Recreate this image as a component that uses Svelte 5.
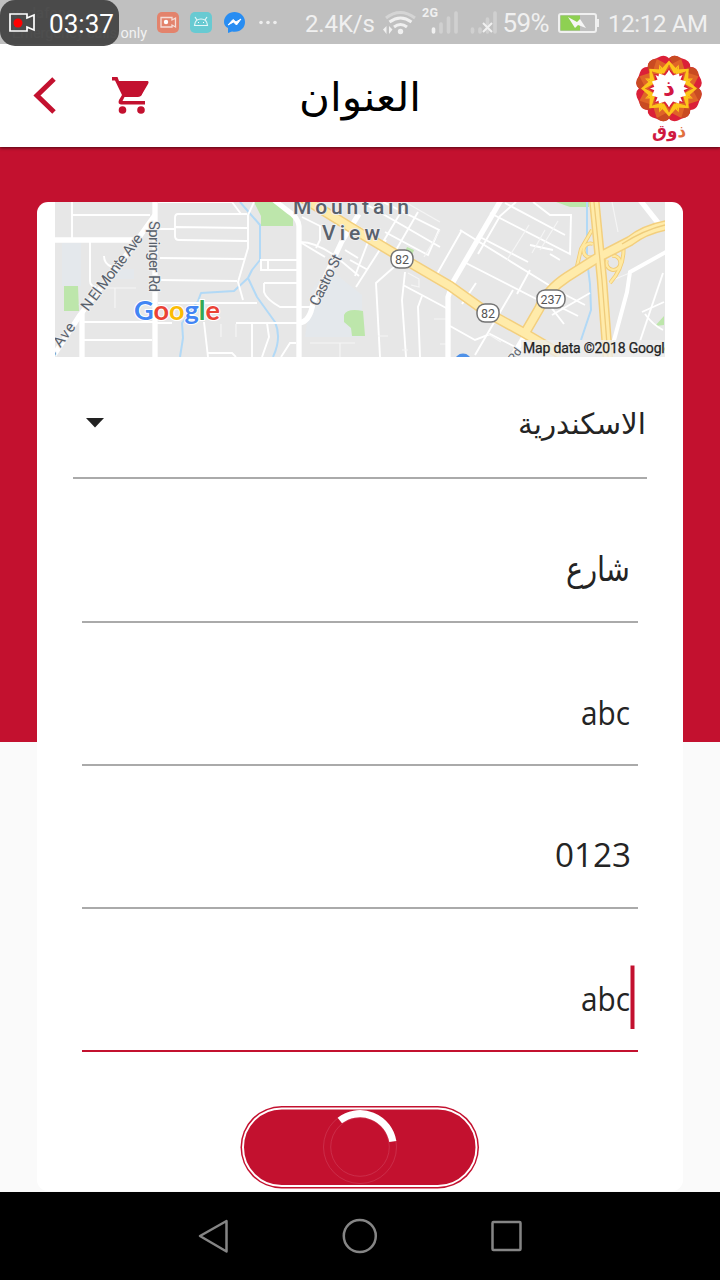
<script>
  const minorRoads = [
    'M72 202V240', 'M72 215H150', 'M90 241V281Q90 286 96 287', 'M82 322H155', 'M82 340H152', 'M104 256Q104 264 112 267',
    'M247 214H178Q175 214 175 218V236Q175 240 179 240L247 241', 'M158 229H175M175 227L247 228', 'M158 202H232L241 214', 'M160 258L245 259', 'M160 280L237 281',
    'M158 303H257', 'M254 202L248 215V248L238 282L243 300', 'M155 323H172M236 323H299', 'M204 322L208 357M208 353H232L236 357', 'M252 323V357', 'M267 323L269 337L262 357', 'M296 343H290L281 357',
    'M299 260H261V270H299M268 260V269', 'M264 283H298M264 283V292Q266 299 280 307H312', 'M300 242L325 257M302 217L320 226V240L316 248', 'M300 242Q315 242 334 255L359 276', 'M345 250L358 258',
    'M350 222L371 234L355 276', 'M362 202L440 247M383 202L439 230L428 255L385 232', 'M407 202L380 247M418 212L392 257', 'M350 260L368 270M356 287L386 240', 'M402 260L376 283L380 357',
    'M405 272L402 300L406 357M403 285L450 310', 'M422 296L418 307L420 357', 'M462 230L437 274M460 230L560 292L585 305', 'M464 262L550 306L564 324', 'M530 270L517 294M513 290L475 355',
    'M552 315L590 293M476 283L462 304', 'M450 326L475 340L490 334L525 352', 'M490 213L570 254L571 215H550L533 202', 'M505 203L565 235M516 202L500 216L478 254', 'M480 237L528 262',
    'M553 250L530 245M550 254L560 260', 'M556 305L578 316', 'M663 273L637 350', 'M642 312L664 302M645 314Q653 325 663 330'
  ];
  const fineRoads = ['M96 288H136M115 288V308', 'M221 324V337M236 324V337', 'M310 343H355M340 343V357', 'M529 225L507 260M545 230L532 253M558 221L540 250', 'M408 273L419 279V287L411 285', 'M440 230L424 257', 'M612 202L618 232', 'M608 282L632 272', 'M378 336H388M402 350H408M434 319H449M440 344H448', 'M405 202L440 222', 'M488 334L501 342'];
  const majorRoads = ['M299 357V226Q298 217 288 211L274 200', 'M155 202V357', 'M155 215L130 250L80 315L54 355', 'M55 240H140', 'M82 313V357', 'M359 214L342 241L313 303Q310 322 299 323', 'M501 200L453 282L448 297V357', 'M640 200L659 224', 'M526 334L512 357'];
  const highways = ['M303 198L350 227L402 258L450 286L488 313L526 334L560 354', 'M525 333L539 309Q547 290 567 277L597 258L630 241Q645 229 668 225', 'M594 198L602 280L608 360'];
  const ramps = ['M592 230L581 249L575 275', 'M593 244A7 7 0 1 0 593 257', 'M623 244Q626 265 610 283', 'M607 260A7 7 0 1 0 612 256'];
  const shields = [{ x: 402, y: 259, n: '82', w: 22 }, { x: 488, y: 313, n: '82', w: 22 }, { x: 551, y: 299, n: '237', w: 28 }];
  const petals = [0, 45, 90, 135, 180, 225, 270, 315];
  const fields = [
    { y: 581, text: 'شارع', x: 566, w: 64, rtl: true },
    { y: 725, text: 'abc', x: 581, w: 49 },
    { y: 867, text: '0123', x: 555, w: 76 },
    { y: 1011, text: 'abc', x: 581, w: 49, active: true }
  ];
</script>

<div class="phone">
  <div class="status">
    <svg width="300" height="48" viewBox="0 0 300 48">
      <g fill="#f2f2f2" font-family="Roboto" font-size="14.5">
        <text x="12" y="18" textLength="62">vodafone</text>
        <text x="12" y="38" textLength="135">Emergency calls only</text>
      </g>
      <rect x="0" y="0" width="119" height="46" rx="15" fill="#404040" fill-opacity=".92" />
      <path d="M10 14H27V18L34 15V30L27 27V31H10Z" fill="none" stroke="#fff" stroke-width="1.7" />
      <circle cx="18" cy="23" r="4.5" fill="red" />
      <text x="49" y="33" textLength="65" lengthAdjust="spacingAndGlyphs" font-size="26" font-family="Roboto" fill="#fff">03:37</text>
      <rect x="157" y="12" width="22" height="21" rx="5" fill="#e3836c" />
      <path d="M161 17.500H172V20L175.500 18V27L172 25V27H161Z" fill="none" stroke="#f5ddd7" stroke-width="1.300" /><circle cx="166" cy="22" r="2.200" fill="#fff" />
      <rect x="190" y="12" width="22" height="21" rx="5" fill="#68cad2" />
      <path d="M194.500 25.500Q195 19 201 19T207.500 25.500ZM197 20L195 17M205 20L207 17" fill="none" stroke="#e6f7f8" stroke-width="1.200" /><path d="M198 22.500h1M203 22.500h1" stroke="#fff" />
      <path d="M228 28V33L232 31.500C240 33 245 28 245 22C245 16 240 12 234.500 12S224 16 224 22Q224 26 228 28Z" fill="#288df2" />
      <path d="M228 25L233 19.500L236 22L241 19L236.500 25L233.500 22Z" fill="#fff" stroke="#fff" stroke-width="1" />
      <g fill="#eee"><circle cx="261" cy="22.500" r="1.800" /><circle cx="268" cy="22.500" r="1.800" /><circle cx="275" cy="22.500" r="1.800" /></g>
    </svg>
    <svg width="420" height="44" viewBox="300 0 420 44">
      <g font-family="Roboto" fill="#f0f0f0">
        <text x="305" y="31.500" textLength="70" font-size="24">2.4K/s</text>
        <text x="422" y="17" textLength="16" font-size="12.500" font-weight="700">2G</text>
        <text x="502.500" y="32" textLength="47" font-size="26">59%</text>
        <text x="608" y="31.500" textLength="100" font-size="24">12:12 AM</text>
      </g>
      <path d="M386 18Q400 7 415 18" fill="none" stroke="#d5d5d5" stroke-width="3" />
      <g fill="none" stroke="#f0f0f0" stroke-width="3"><path d="M389.500 22Q400.500 14 411.500 22M394 27Q400.500 22 407 27" /></g>
      <circle cx="400.500" cy="31.500" r="2.700" fill="#f0f0f0" />
      <path d="M383 29.500L386.500 26V34ZM389 26L392.500 29.500L389 34Z" fill="#f0f0f0" />
      <g stroke="#d0d0d0" stroke-width="3.600" stroke-linecap="round"><path d="M433.500 29V32" stroke="#f0f0f0" /><path d="M441 24V32M448.500 18V32M456 13V32M472.500 29V32M480 29V32M487.500 19V32M495 13V32" /></g>
      <path d="M483 23L492 32M492 23L483 32" stroke="#f0f0f0" stroke-width="2" />
      <rect x="559" y="14" width="37" height="18" rx="2" fill="none" stroke="#f0f0f0" stroke-width="2" /><path d="M598 19V27" stroke="#f0f0f0" stroke-width="2" /><path d="M560.500 15.500H580V30.500H560.500Z" fill="#8ed052" />
      <path d="M568 17L577 22L580 19L586 28L578 25L575 28Z" fill="#f6f6f6" />
    </svg>
  </div>

  <header>
    <svg width="720" height="103" viewBox="0 44 720 103">
      <path d="M54 79L37 95.500L54 112" fill="none" stroke="#c3112f" stroke-width="5" />
      <path d="M112 77H117.500L119 81H147Q149.500 81 148 84L141.500 95Q140.500 97 138 97H124.500L122.500 101H145V104.500H121Q117.500 104 119 100L122 95L115 80.500H112Z" fill="#c3112f" />
      <path d="M119 81H148L141 96H124Z" fill="#c3112f" />
      <circle cx="122.500" cy="110" r="3.800" fill="#c3112f" /><circle cx="141" cy="110" r="3.800" fill="#c3112f" />
      <text class="arabic" x="299" y="111" textLength="122" lengthAdjust="spacingAndGlyphs" font-size="40">العنوان</text>
      <g transform="translate(669 88.500)">
        {#each petals as a}
          <g transform="rotate({a + 22.5})">
            <path d="M0 -10L-12.500 -23Q-12 -33 -4 -33Q0 -32.500 4 -33Q12 -33 12.500 -23Z" fill="#db2038" />
            <path d="M-12.500 -24Q-11 -33 -4 -33L0 -32L-5 -24Z" fill="#c94b22" />
            <path d="M0 -32L10 -20L0 -15L-10 -20Z" fill="#df6428" />
          </g>
        {/each}
        {#each petals as a}
          <path transform="rotate({a})" d="M0 -28L8 -19L10 -24L10 -17L5 -15L0 -24L-5 -15L-10 -17L-10 -24L-8 -19Z" fill="#fdc51b" />
        {/each}
        <path d="M0 -18L4 -13L10 -15L11 -9L17 -7L14 0L17 7L11 9L10 15L4 13L0 18L-4 13L-10 15L-11 9L-17 7L-14 0L-17 -7L-11 -9L-10 -15L-4 -13Z" fill="#fff" />
      </g>
      <text class="arabic bold" x="663" y="96" textLength="12" lengthAdjust="spacingAndGlyphs" font-size="23" fill="#d31742">ذ</text>
      <text class="arabic bold" x="652" y="137" textLength="34" lengthAdjust="spacingAndGlyphs" font-size="18" fill="#cf1941"><tspan fill="#e1703d">ذ</tspan>وق</text>
    </svg>
  </header>

  <main>
    <section class="card">
      <svg class="map" width="610" height="155" viewBox="55 202 610 155">
        <path fill="#e7e7e7" d="M55 202h610v155H55z" />
        <path fill="#e4e8ec" d="M62 243h19v43h-19zM108 269h26v10h-26zM312 290L328 268L362 295V337H305Z" />
        <path fill="#bde6ab" d="M64 286h14l1 25H64zM254 202H281L293 217V226H261V216ZM344 315Q347 308 363 311L365 336H352L351 328L344 322ZM556 202H589V207H570ZM655 326L664 316V325ZM407 247L414 250L412 255L405 252Z" />
        <g fill="none" stroke="#b2d9f6" stroke-width="2" stroke-linejoin="round"><path d="M240 202L260 225V260L252 270L248 278L234 291L201 293L198 301L182 323L183 338L180 357M248 278L257 297L275 322Q282 338 273 357M587 202V260L590 284L591 310L581 340" /></g>
        <g fill="none" stroke="#fff" stroke-width="1.900">{#each minorRoads as d}<path {d} />{/each}</g>
        <g fill="none" stroke="#f5f5f5" stroke-width="1.200">{#each fineRoads as d}<path {d} />{/each}</g>
        <g fill="none" stroke="#fff" stroke-width="5.300" stroke-linejoin="round">{#each majorRoads as d}<path {d} />{/each}</g>
        <path d="M666 252L630 272L627 292L613 344" fill="none" stroke="#fff" stroke-width="4" />
        <g fill="none" stroke="#f1cb76" stroke-width="4">{#each ramps as d}<path {d} />{/each}</g>
        <g fill="none" stroke="#ffe9a1" stroke-width="2.300">{#each ramps as d}<path {d} />{/each}</g>
        <g fill="none" stroke="#f3cf7e" stroke-width="10.500">{#each highways as d}<path {d} />{/each}</g>
        <g fill="none" stroke="#ffebaa" stroke-width="7.500">{#each highways as d}<path {d} />{/each}</g>
        <path d="M594 202L602 280L608 357M622 244Q644 230 665 225" fill="none" stroke="#efcc7c" stroke-width="1.300" />
        {#each shields as s}
          <rect x={s.x - s.w / 2} y={s.y - 9} width={s.w} height="18" rx="8" fill="#fff" stroke="#737373" stroke-width="1.500" />
          <text x={s.x} y={s.y + 4.5} text-anchor="middle" font-family="Roboto" font-size="12.500" fill="#555">{s.n}</text>
        {/each}
        <g class="label" font-family="Roboto" fill="#59616c">
          <text x="293" y="214" textLength="116" font-size="21" font-weight="500">Mountain</text>
          <text x="322" y="240" textLength="58" font-size="21" font-weight="500">View</text>
          <text transform="translate(149 221) rotate(90)" textLength="71" font-size="15">Springer Rd</text>
          <text transform="translate(88 312) rotate(-53)" textLength="92" font-size="15">N El Monte Ave</text>
          <text transform="translate(52 359) rotate(-53)" textLength="40" font-size="15">e Ave</text>
          <text transform="translate(318 307) rotate(-64)" textLength="55" font-size="15">Castro St</text>
          <text transform="translate(514 363) rotate(-54)" font-size="12">Rd</text>
        </g>
        <text class="google" x="134" y="320" textLength="86" lengthAdjust="spacingAndGlyphs" font-size="26"><tspan fill="#4285f4">G</tspan><tspan fill="#ea4335">o</tspan><tspan fill="#fbbc05">o</tspan><tspan fill="#4285f4">g</tspan><tspan fill="#34a853">l</tspan><tspan fill="#ea4335">e</tspan></text>
        <circle cx="463" cy="362" r="8.500" fill="#4e91e8" />
        <path d="M521 340H665V357H521Z" fill="#eee" fill-opacity=".75" />
        <text x="523" y="353" textLength="149" font-family="Roboto" font-size="14" fill="#222" stroke="#222" stroke-width=".25">Map data ©2018 Google</text>
      </svg>

      <svg class="select" width="574" height="123" viewBox="73 357 574 123">
        <path d="M86 418H104L95 427.500Z" fill="#222" />
        <text class="arabic" x="518" y="433.500" textLength="128" lengthAdjust="spacingAndGlyphs" font-size="29" fill="#242424">الاسكندرية</text>
        <path d="M73 478H647" stroke="#aaa" stroke-width="2" />
      </svg>

      {#each fields as f, i}
        {@const top = 480 + i * 143}
        <svg class="field" width="556" height="143" viewBox="82 {top} 556 143">
          <text class:arabic={f.rtl} class:latin={!f.rtl} x={f.x} y={f.y} textLength={f.w} lengthAdjust="spacingAndGlyphs" font-size={f.rtl ? 34 : 32} fill="#242424">{f.text}</text>
          {#if f.active}<path d="M632.500 965.500V1029" stroke="#c3112f" stroke-width="4" />{/if}
          <path d="M82 {top + 142}H638" stroke={f.active ? '#c3112f' : '#aaa'} stroke-width="2" />
        </svg>
      {/each}

      <div class="button">
        <svg width="240" height="83" viewBox="240 1106 240 83">
          <rect x="240.500" y="1106" width="238.500" height="82.500" rx="41.250" fill="#c3112f" />
          <rect x="243" y="1108.500" width="233.500" height="77.500" rx="38.750" fill="none" stroke="#fff" stroke-width="2" />
          <g fill="none" stroke="#d0405a" stroke-width=".6"><circle cx="360" cy="1147" r="36.500" /><circle cx="360" cy="1147" r="29.300" /></g>
          <path d="M339.800 1120.500A33.300 33.300 0 0 1 392.800 1141.500" fill="none" stroke="#fff" stroke-width="7.200" />
        </svg>
      </div>
    </section>
  </main>

  <nav>
    <svg width="720" height="88" viewBox="0 1192 720 88" fill="none" stroke="#858585" stroke-width="2.500" stroke-linejoin="round">
      <path d="M200 1236L226.500 1221V1251.500Z" /><circle cx="359.800" cy="1236" r="16" /><rect x="492.500" y="1222" width="28" height="28" rx="1" />
    </svg>
  </nav>
</div>

<style>
  :global(body) { margin: 0; }
  .phone { display: flex; flex-direction: column; width: 720px; height: 1280px; overflow: hidden; background: #fafafa; }
  svg { display: block; flex-shrink: 0; }
  .status { display: flex; height: 44px; flex-shrink: 0; background: #c0c0c0; position: relative; z-index: 2; }
  .status svg:first-child { overflow: visible; }
  header { height: 103px; flex-shrink: 0; background: #fff; position: relative; z-index: 1; box-shadow: 0 1px 3px rgba(0, 0, 0, .6); }
  main { height: 1045px; flex-shrink: 0; box-sizing: border-box; padding: 55px 37px 0; background: linear-gradient(#c3112f 595.5px, #fafafa 595.5px); }
  .card { display: flex; flex-direction: column; align-items: center; height: 989px; background: #fff; border-radius: 11px; }
  .button { margin-top: 54px; }
  nav { height: 88px; background: #000; flex-shrink: 0; }
  .arabic { font-family: "DejaVu Sans", sans-serif; direction: rtl; text-anchor: end; font-weight: 400; }
  .bold { font-weight: 700; }
  .latin { font-family: "Open Sans", sans-serif; font-weight: 400; }
  .label text { paint-order: stroke; stroke: #eee; stroke-width: 2px; }
  .google { font-family: Lato, sans-serif; font-weight: 700; paint-order: stroke; stroke: #fff; stroke-width: 2px; }
</style>
